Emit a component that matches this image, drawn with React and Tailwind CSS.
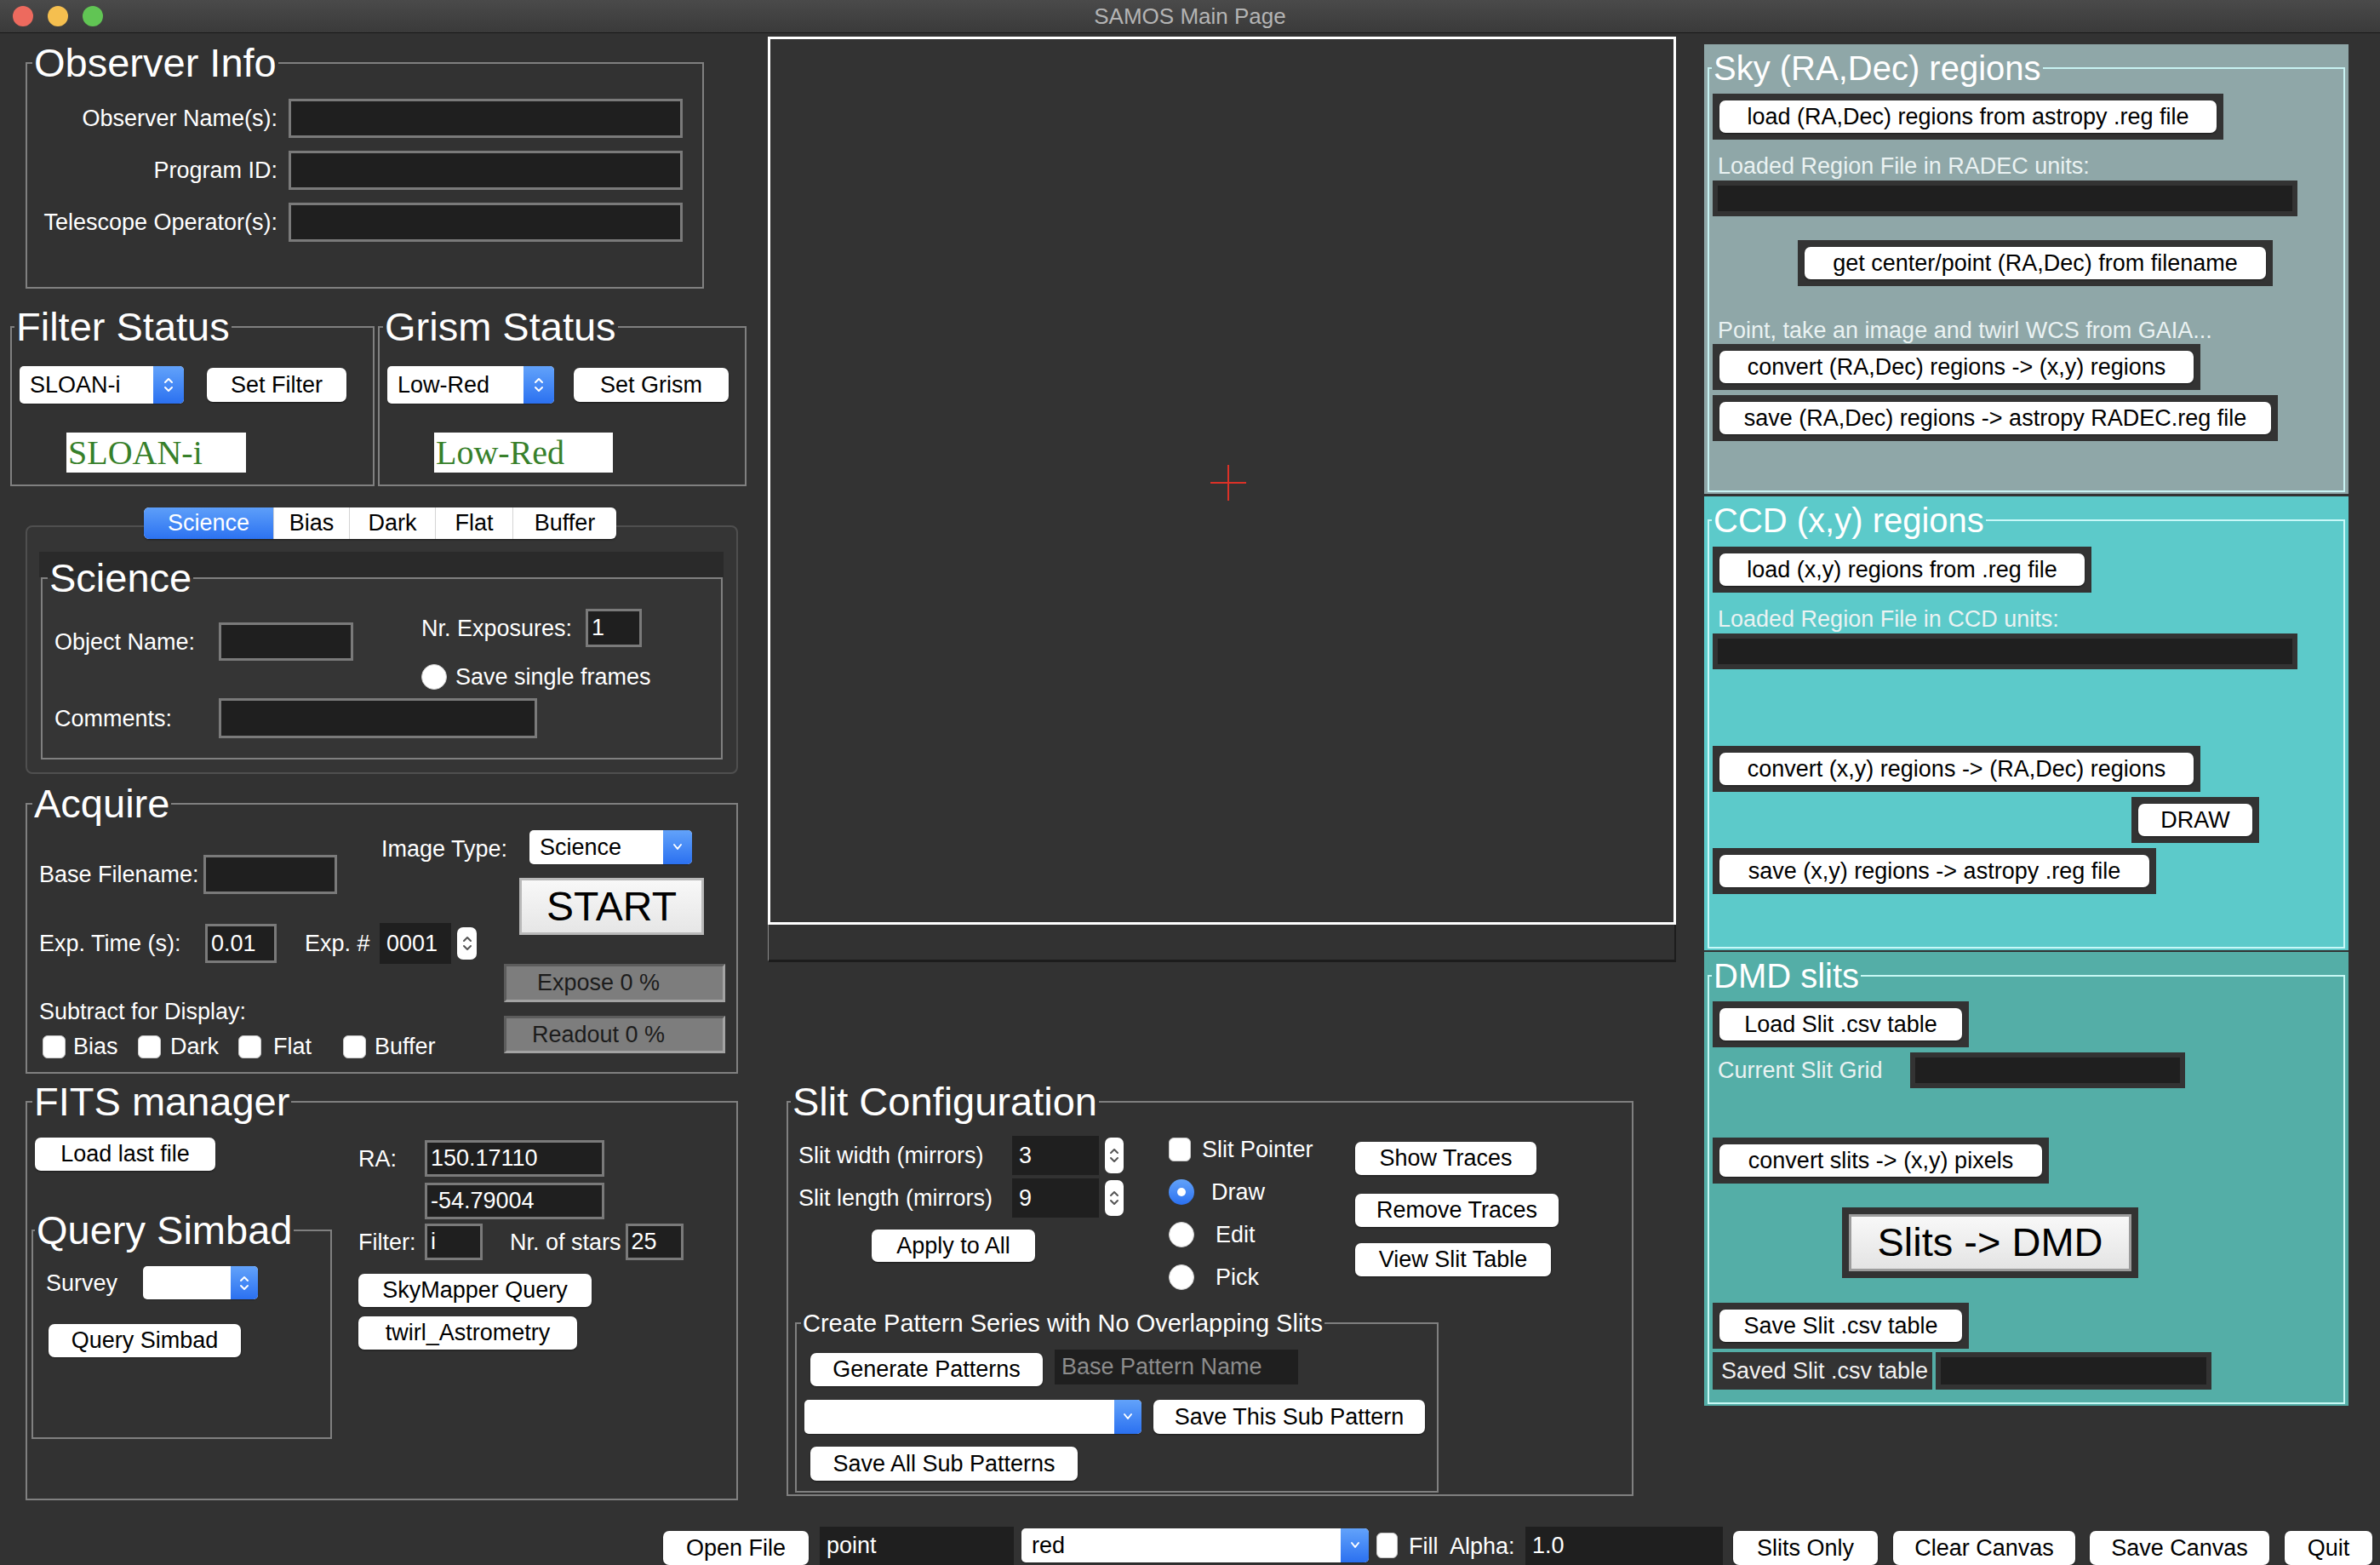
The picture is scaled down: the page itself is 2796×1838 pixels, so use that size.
// App.jsx – SAMOS main page
import React from 'react';

const UpDown = ({ color = 'white' }) => (
  <svg width="14" height="24" viewBox="0 0 14 24" fill="none" stroke={color} strokeWidth="2" strokeLinecap="round" strokeLinejoin="round">
    <path d="M3 9l4-4 4 4M3 15l4 4 4-4" />
  </svg>
);

const Down = () => (
  <svg width="14" height="12" viewBox="0 0 14 12" fill="none" stroke="white" strokeWidth="2" strokeLinecap="round" strokeLinejoin="round">
    <path d="M3 3l4 5 4-5" />
  </svg>
);

const Label = ({ children, className = '' }) => (
  <div className={`text-white text-[27px] leading-[30px] whitespace-nowrap ${className}`}>{children}</div>
);

const Btn = ({ children, className = '' }) => (
  <div className={`flex items-center justify-center bg-white rounded-[7px] text-black text-[27px] leading-none whitespace-nowrap shadow-[0_1px_2px_rgba(0,0,0,0.5)] ${className}`}>
    {children}
  </div>
);

const Entry = ({ value = '', className = '' }) => (
  <div className={`flex items-center bg-[#1f1f1f] border-[3px] border-[#7a7a7a] text-white text-[27px] px-[4px] ${className}`}>{value}</div>
);

const Flat = ({ value = '', className = '' }) => (
  <div className={`flex items-center bg-[#1f1f1f] text-white text-[27px] px-[8px] ${className}`}>{value}</div>
);

const Combo = ({ value = '', className = '', arrow = 'updown', arrowClass = 'w-[36px]' }) => (
  <div className={`flex bg-white rounded-[5px] overflow-hidden shadow-[0_1px_1px_rgba(0,0,0,0.3)] ${className}`}>
    <div className="flex-1 flex items-center pl-[12px] text-black text-[27px]">{value}</div>
    <div className={`flex items-center justify-center bg-gradient-to-b from-[#62a2fa] to-[#2b70f0] ${arrowClass}`}>
      {arrow === 'down' ? <Down /> : <UpDown />}
    </div>
  </div>
);

const Stepper = ({ className = '' }) => (
  <div className={`flex items-center justify-center bg-white rounded-[7px] ${className}`}>
    <UpDown color="#555" />
  </div>
);

const Check = ({ className = 'w-[27px] h-[27px]' }) => (
  <span className={`block rounded-[6px] bg-white border border-[#c8c8c8] ${className}`} />
);

const Radio = ({ on }) =>
  on ? (
    <span className="flex items-center justify-center w-[30px] h-[30px] rounded-full bg-gradient-to-b from-[#62a2fa] to-[#2b70f0]">
      <span className="w-[10px] h-[10px] rounded-full bg-white" />
    </span>
  ) : (
    <span className="block w-[30px] h-[30px] rounded-full bg-white border border-[#cfcfcf]" />
  );

// Tk-style labelframe: the title sits on the top border line
const Frame = ({ title, className = '', titleClass = '', children }) => (
  <div className={`relative border-2 ${className}`}>
    <div className={`absolute px-[2px] whitespace-nowrap ${titleClass}`}>{title}</div>
    {children}
  </div>
);

const big = 'text-[47px] leading-[46px] top-[-24px] text-white';

const DarkWrap = ({ className = '', children }) => <div className={`bg-[#333333] p-[8px] ${className}`}>{children}</div>;

const PanelBtn = ({ children }) => <Btn className="h-[38px] w-full">{children}</Btn>;

const PanelEntry = ({ className = '' }) => (
  <div className={`bg-[#333333] p-[6px] ${className}`}>
    <div className="bg-[#1f1f1f] w-full h-full" />
  </div>
);

const PanelLabel = ({ children, className = '' }) => (
  <div className={`text-[#eaf2f2] text-[27px] leading-[30px] whitespace-nowrap ${className}`}>{children}</div>
);

const GreenLabel = ({ children, className = '' }) => (
  <div className={`flex items-center bg-white h-[47px] pl-[2px] text-[40px] text-[#37802a] font-['Liberation_Serif',serif] ${className}`}>{children}</div>
);

function TitleBar() {
  return (
    <div className="h-[39px] flex items-center bg-gradient-to-b from-[#4a4a4a] to-[#3a3a3a] border-b border-[#1a1a1a]">
      <div className="flex items-center gap-[17px] pl-[15px] w-[121px]">
        <span className="w-[24px] h-[24px] rounded-full bg-[#ed6a5e]" />
        <span className="w-[24px] h-[24px] rounded-full bg-[#f5bf4f]" />
        <span className="w-[24px] h-[24px] rounded-full bg-[#61c554]" />
      </div>
      <div className="flex-1 text-center text-[26px] text-[#b4b4b4]">SAMOS Main Page</div>
      <div className="w-[121px]" />
    </div>
  );
}

function LeftColumn() {
  const tabs = [
    { name: 'Science', w: 'w-[152px]' },
    { name: 'Bias', w: 'w-[89px]' },
    { name: 'Dark', w: 'w-[101px]' },
    { name: 'Flat', w: 'w-[91px]' },
    { name: 'Buffer', w: 'w-[122px]' },
  ];
  return (
    <div className="w-[890px] flex flex-col items-start">
      <Frame title="Observer Info" className="ml-[30px] mt-[34px] w-[797px] h-[266px] border-[#808080]" titleClass={`${big} left-[6px] bg-[#323232]`}>
        <div className="flex flex-col gap-[15px] pt-[41px]">
          {['Observer Name(s):', 'Program ID:', 'Telescope Operator(s):'].map((l) => (
            <div key={l} className="flex items-center">
              <Label className="w-[294px] text-right">{l}</Label>
              <Entry className="ml-[13px] w-[463px] h-[46px]" />
            </div>
          ))}
        </div>
      </Frame>

      <div className="flex gap-[4px] ml-[12px] mt-[44px]">
        <Frame title="Filter Status" className="w-[428px] h-[188px] border-[#808080]" titleClass={`${big} left-[3px] bg-[#323232]`}>
          <div className="pt-[45px] pl-[9px]">
            <div className="flex items-center">
              <Combo value="SLOAN-i" className="w-[193px] h-[44px]" />
              <Btn className="ml-[27px] w-[164px] h-[40px]">Set Filter</Btn>
            </div>
            <GreenLabel className="mt-[34px] ml-[55px] w-[211px]">SLOAN-i</GreenLabel>
          </div>
        </Frame>
        <Frame title="Grism Status" className="w-[433px] h-[188px] border-[#808080]" titleClass={`${big} left-[4px] bg-[#323232]`}>
          <div className="pt-[45px] pl-[9px]">
            <div className="flex items-center">
              <Combo value="Low-Red" className="w-[196px] h-[44px]" />
              <Btn className="ml-[23px] w-[182px] h-[40px]">Set Grism</Btn>
            </div>
            <GreenLabel className="mt-[34px] ml-[55px] w-[210px]">Low-Red</GreenLabel>
          </div>
        </Frame>
      </div>

      {/* exposure type notebook */}
      <div className="relative ml-[30px] mt-[46px] w-[837px] h-[292px] rounded-[8px] border-2 border-[#4f4f4f] bg-[#353535]">
        <div className="absolute left-[137px] top-[-23px] h-[37px] flex rounded-[6px] overflow-hidden bg-white shadow-[0_1px_2px_rgba(0,0,0,0.5)]">
          {tabs.map((t, i) => (
            <div
              key={t.name}
              className={`${t.w} flex items-center justify-center text-[27px] ${
                i === 0 ? 'bg-gradient-to-b from-[#5d9ef9] to-[#2c72f1] text-white' : 'text-black border-l border-[#d4d4d4]'
              }`}
            >
              {t.name}
            </div>
          ))}
        </div>
        <div className="pt-[29px] pl-[14px]">
          <div className="w-[804px] h-[30px] bg-[#2a2a2a]" />
          <Frame
            title="Science"
            className="ml-[2px] w-[801px] h-[214px] border-[#808080]"
            titleClass={`${big} left-[6px] bg-[linear-gradient(#2a2a2a_50%,#353535_50%)]`}
          >
            <div className="flex items-start pl-[14px]">
              <div className="flex items-center mt-[51px]">
                <Label className="w-[193px]">Object Name:</Label>
                <Entry className="w-[158px] h-[45px]" />
              </div>
              <div className="flex flex-col ml-[80px]">
                <div className="flex items-center mt-[35px]">
                  <Label className="w-[193px]">Nr. Exposures:</Label>
                  <Entry value="1" className="w-[66px] h-[45px]" />
                </div>
                <div className="flex items-center mt-[20px]">
                  <Radio />
                  <Label className="ml-[10px]">Save single frames</Label>
                </div>
              </div>
            </div>
            <div className="flex items-center mt-[10px] pl-[14px]">
              <Label className="w-[193px]">Comments:</Label>
              <Entry className="w-[374px] h-[47px]" />
            </div>
          </Frame>
        </div>
      </div>

      <Frame title="Acquire" className="ml-[30px] mt-[34px] w-[837px] h-[318px] border-[#808080]" titleClass={`${big} left-[6px] bg-[#323232]`}>
        <div className="flex">
          <div className="w-[560px] pl-[14px] flex flex-col items-start">
            <div className="flex items-start">
              <div className="flex items-center mt-[59px]">
                <Label className="w-[193px]">Base Filename:</Label>
                <Entry className="w-[157px] h-[46px]" />
              </div>
              <Label className="ml-[52px] mt-[37px]">Image Type:</Label>
            </div>
            <div className="flex items-center mt-[34px]">
              <Label className="w-[195px]">Exp. Time (s):</Label>
              <Entry value="0.01" className="w-[84px] h-[46px]" />
              <Label className="ml-[33px] w-[88px]">Exp. #</Label>
              <Flat value="0001" className="w-[84px] h-[48px]" />
              <Stepper className="ml-[7px] w-[23px] h-[38px]" />
            </div>
            <Label className="mt-[41px]">Subtract for Display:</Label>
            <div className="flex items-center mt-[11px] ml-[4px]">
              <div className="flex items-center w-[112px]"><Check /><Label className="ml-[9px]">Bias</Label></div>
              <div className="flex items-center w-[118px]"><Check /><Label className="ml-[11px]">Dark</Label></div>
              <div className="flex items-center w-[123px]"><Check /><Label className="ml-[14px]">Flat</Label></div>
              <div className="flex items-center"><Check /><Label className="ml-[10px]">Buffer</Label></div>
            </div>
          </div>
          <div className="flex flex-col items-start">
            <Combo value="Science" arrow="down" arrowClass="w-[34px]" className="ml-[30px] mt-[30px] w-[191px] h-[40px] rounded-[3px]" />
            <div className="ml-[18px] mt-[16px] w-[217px] h-[67px] flex items-center justify-center border-[3px] border-[#b9b9b9] bg-gradient-to-b from-[#f8f8f8] to-[#e6e6e6] text-black text-[48px]">
              START
            </div>
            <div className="mt-[34px] w-[260px] h-[45px] flex items-center pl-[36px] bg-[#7d7d7d] border-[3px] border-[#a3a3a3] border-t-[#5c5c5c] border-l-[#5c5c5c] text-[#1c1c1c] text-[27px]">
              Expose 0 %
            </div>
            <div className="mt-[16px] w-[260px] h-[44px] flex items-center pl-[30px] bg-[#7d7d7d] border-[3px] border-[#a3a3a3] border-t-[#5c5c5c] border-l-[#5c5c5c] text-[#1c1c1c] text-[27px]">
              Readout 0 %
            </div>
          </div>
        </div>
      </Frame>

      <Frame title="FITS manager" className="ml-[30px] mt-[32px] w-[837px] h-[469px] border-[#808080]" titleClass={`${big} left-[6px] bg-[#323232]`}>
        <div className="flex">
          <div className="w-[389px] flex flex-col items-start">
            <Btn className="ml-[9px] mt-[41px] w-[212px] h-[39px]">Load last file</Btn>
            <Frame title="Query Simbad" className="ml-[5px] mt-[69px] w-[353px] h-[246px] border-[#808080]" titleClass={`${big} left-[2px] bg-[#323232]`}>
              <div className="flex items-center mt-[41px] pl-[15px]">
                <Label className="w-[114px]">Survey</Label>
                <Combo className="w-[135px] h-[39px]" arrowClass="w-[32px]" />
              </div>
              <Btn className="ml-[18px] mt-[29px] w-[226px] h-[39px]">Query Simbad</Btn>
            </Frame>
          </div>
          <div className="flex flex-col items-start">
            <div className="flex items-center mt-[44px]">
              <Label className="w-[78px]">RA:</Label>
              <Entry value="150.17110" className="w-[211px] h-[43px]" />
            </div>
            <Entry value="-54.79004" className="ml-[78px] mt-[7px] w-[211px] h-[43px]" />
            <div className="flex items-center mt-[5px]">
              <Label className="w-[78px]">Filter:</Label>
              <Entry value="i" className="w-[68px] h-[43px]" />
              <Label className="ml-[32px]">Nr. of stars</Label>
              <Entry value="25" className="ml-[5px] w-[68px] h-[43px]" />
            </div>
            <Btn className="mt-[16px] w-[274px] h-[39px]">SkyMapper Query</Btn>
            <Btn className="mt-[11px] w-[257px] h-[39px]">twirl_Astrometry</Btn>
          </div>
        </div>
      </Frame>
    </div>
  );
}

function MiddleColumn() {
  return (
    <div className="w-[1100px] flex flex-col items-start">
      <div className="ml-[12px] mt-[4px] w-[1067px]">
        <div className="relative h-[1043px] border-[3px] border-white bg-[#333333]">
          <svg className="absolute left-[517px] top-[500px]" width="42" height="42" viewBox="0 0 42 42">
            <path d="M21 0V42M0 21H42" stroke="#dc3127" strokeWidth="2" />
          </svg>
        </div>
        <div className="h-[44px] border-l border-[#8a8a8a] border-b-[3px] border-b-[#1c1c1c] border-r-2 border-r-[#1c1c1c]" />
      </div>

      <Frame title="Slit Configuration" className="ml-[34px] mt-[163px] w-[995px] h-[464px] border-[#808080]" titleClass={`${big} left-[3px] bg-[#323232]`}>
        <div className="flex items-start">
          <div className="pl-[12px] flex flex-col items-start">
            <div className="flex items-center mt-[39px]">
              <Label className="w-[251px]">Slit width (mirrors)</Label>
              <Flat value="3" className="w-[102px] h-[46px]" />
              <Stepper className="ml-[7px] w-[22px] h-[42px]" />
            </div>
            <div className="flex items-center mt-[4px]">
              <Label className="w-[251px]">Slit length (mirrors)</Label>
              <Flat value="9" className="w-[102px] h-[46px]" />
              <Stepper className="ml-[7px] w-[22px] h-[42px]" />
            </div>
            <Btn className="ml-[86px] mt-[14px] w-[192px] h-[38px]">Apply to All</Btn>
          </div>
          <div className="ml-[53px] w-[219px] flex flex-col items-start">
            <div className="flex items-center mt-[40px]">
              <Check className="w-[26px] h-[28px]" />
              <Label className="ml-[13px]">Slit Pointer</Label>
            </div>
            <div className="flex items-center mt-[20px]">
              <Radio on />
              <Label className="ml-[20px]">Draw</Label>
            </div>
            <div className="flex items-center mt-[20px]">
              <Radio />
              <Label className="ml-[25px]">Edit</Label>
            </div>
            <div className="flex items-center mt-[20px]">
              <Radio />
              <Label className="ml-[25px]">Pick</Label>
            </div>
          </div>
          <div className="flex flex-col items-start">
            <Btn className="mt-[46px] w-[213px] h-[39px]">Show Traces</Btn>
            <Btn className="mt-[22px] w-[239px] h-[39px]">Remove Traces</Btn>
            <Btn className="mt-[19px] w-[230px] h-[39px]">View Slit Table</Btn>
          </div>
        </div>
        <Frame
          title="Create Pattern Series with No Overlapping Slits"
          className="ml-[8px] mt-[38px] w-[756px] h-[200px] border-[#808080]"
          titleClass="text-[29px] leading-[30px] top-[-16px] left-[5px] text-white bg-[#323232]"
        >
          <div className="flex items-start">
            <Btn className="ml-[16px] mt-[34px] w-[273px] h-[39px]">Generate Patterns</Btn>
            <div className="ml-[14px] mt-[30px] w-[286px] h-[41px] flex items-center px-[8px] bg-[#1f1f1f] text-[#8c8c8c] text-[27px] whitespace-nowrap">
              Base Pattern Name
            </div>
          </div>
          <div className="flex items-center mt-[16px]">
            <Combo arrow="down" arrowClass="w-[32px]" className="ml-[9px] w-[396px] h-[40px] rounded-[3px]" />
            <Btn className="ml-[14px] w-[319px] h-[40px]">Save This Sub Pattern</Btn>
          </div>
          <Btn className="ml-[16px] mt-[15px] w-[314px] h-[40px]">Save All Sub Patterns</Btn>
        </Frame>
      </Frame>
    </div>
  );
}

const panelTitle = 'text-[40px] leading-[40px] top-[-21px] left-[3px] text-white';

function RightColumn() {
  return (
    <div className="w-[806px] flex flex-col items-start">
      {/* Sky regions */}
      <div className="ml-[12px] mt-[13px] w-[757px] h-[528px] bg-[#8fa7a8] pt-[27px] pl-[4px]">
        <Frame title="Sky (RA,Dec) regions" className="w-[749px] h-[499px] border-[#c8f2f2]" titleClass={`${panelTitle} bg-[#8fa7a8]`}>
          <div className="flex flex-col items-start pl-[4px]">
            <DarkWrap className="mt-[29px] w-[600px]"><PanelBtn>load (RA,Dec) regions from astropy .reg file</PanelBtn></DarkWrap>
            <PanelLabel className="mt-[16px] ml-[6px]">Loaded Region File in RADEC units:</PanelLabel>
            <PanelEntry className="mt-[2px] w-[687px] h-[42px]" />
            <DarkWrap className="mt-[28px] ml-[100px] w-[558px]"><PanelBtn>get center/point (RA,Dec) from filename</PanelBtn></DarkWrap>
            <PanelLabel className="mt-[37px] ml-[6px]">Point, take an image and twirl WCS from GAIA...</PanelLabel>
            <DarkWrap className="mt-[1px] w-[573px]"><PanelBtn>convert (RA,Dec) regions -&gt; (x,y) regions</PanelBtn></DarkWrap>
            <DarkWrap className="mt-[6px] w-[664px]"><PanelBtn>save (RA,Dec) regions -&gt; astropy RADEC.reg file</PanelBtn></DarkWrap>
          </div>
        </Frame>
      </div>

      {/* CCD regions */}
      <div className="ml-[12px] mt-[3px] w-[757px] h-[533px] bg-[#5ccaca] pt-[27px] pl-[4px]">
        <Frame title="CCD (x,y) regions" className="w-[749px] h-[504px] border-[#c8f8f8]" titleClass={`${panelTitle} bg-[#5ccaca]`}>
          <div className="flex flex-col items-start pl-[4px]">
            <DarkWrap className="mt-[30px] w-[445px]"><PanelBtn>load (x,y) regions from .reg file</PanelBtn></DarkWrap>
            <PanelLabel className="mt-[16px] ml-[6px]">Loaded Region File in CCD units:</PanelLabel>
            <PanelEntry className="mt-[2px] w-[687px] h-[42px]" />
            <DarkWrap className="mt-[90px] w-[573px]"><PanelBtn>convert (x,y) regions -&gt; (RA,Dec) regions</PanelBtn></DarkWrap>
            <DarkWrap className="mt-[6px] ml-[492px] w-[150px]"><PanelBtn>DRAW</PanelBtn></DarkWrap>
            <DarkWrap className="mt-[6px] w-[521px]"><PanelBtn>save (x,y) regions -&gt; astropy .reg file</PanelBtn></DarkWrap>
          </div>
        </Frame>
      </div>

      {/* DMD slits */}
      <div className="ml-[12px] mt-[2px] w-[757px] h-[533px] bg-[#54aea7] pt-[27px] pl-[4px]">
        <Frame title="DMD slits" className="w-[749px] h-[504px] border-[#c8f8f4]" titleClass={`${panelTitle} bg-[#54aea7]`}>
          <div className="flex flex-col items-start pl-[4px]">
            <DarkWrap className="mt-[29px] w-[301px]"><PanelBtn>Load Slit .csv table</PanelBtn></DarkWrap>
            <div className="flex items-center mt-[6px]">
              <PanelLabel className="ml-[6px] w-[226px]">Current Slit Grid</PanelLabel>
              <PanelEntry className="w-[323px] h-[42px]" />
            </div>
            <DarkWrap className="mt-[58px] w-[395px]"><PanelBtn>convert slits -&gt; (x,y) pixels</PanelBtn></DarkWrap>
            <DarkWrap className="mt-[28px] ml-[152px] w-[348px] h-[83px]">
              <div className="w-full h-full flex items-center justify-center border-[3px] border-[#9c9c9c] bg-gradient-to-b from-[#f8f8f8] to-[#e4e4e4] text-black text-[47px]">
                Slits -&gt; DMD
              </div>
            </DarkWrap>
            <DarkWrap className="mt-[29px] w-[301px]"><PanelBtn>Save Slit .csv table</PanelBtn></DarkWrap>
            <div className="flex mt-[4px]">
              <div className="w-[258px] h-[44px] flex items-center pl-[10px] bg-[#333333] text-[#f2f2f2] text-[27px] whitespace-nowrap">
                Saved Slit .csv table
              </div>
              <PanelEntry className="ml-[4px] w-[324px] h-[44px]" />
            </div>
          </div>
        </Frame>
      </div>
    </div>
  );
}

function BottomBar() {
  return (
    <div className="h-[48px] flex items-start pl-[779px]">
      <Btn className="mt-[8px] w-[171px] h-[40px]">Open File</Btn>
      <Flat value="point" className="ml-[13px] mt-[3px] w-[228px] h-[45px] px-[6px]" />
      <Combo value="red" arrow="down" arrowClass="w-[33px]" className="ml-[9px] mt-[5px] w-[408px] h-[40px] rounded-[3px]" />
      <Check className="ml-[9px] mt-[10px] w-[25px] h-[30px]" />
      <Label className="ml-[13px] mt-[11px] w-[48px]">Fill</Label>
      <Label className="mt-[11px] w-[89px]">Alpha:</Label>
      <Flat value="1.0" className="mt-[3px] w-[232px] h-[45px] px-[6px]" />
      <Btn className="ml-[12px] mt-[8px] w-[170px] h-[40px]">Slits Only</Btn>
      <Btn className="ml-[18px] mt-[8px] w-[214px] h-[40px]">Clear Canvas</Btn>
      <Btn className="ml-[17px] mt-[8px] w-[211px] h-[40px]">Save Canvas</Btn>
      <Btn className="ml-[18px] mt-[8px] w-[103px] h-[40px]">Quit</Btn>
    </div>
  );
}

export default function App() {
  return (
    <div className="w-[2796px] h-[1838px] overflow-hidden bg-[#323232] flex flex-col font-['Liberation_Sans',Arial,sans-serif]">
      <TitleBar />
      <div className="flex h-[1751px]">
        <LeftColumn />
        <MiddleColumn />
        <RightColumn />
      </div>
      <BottomBar />
    </div>
  );
}
